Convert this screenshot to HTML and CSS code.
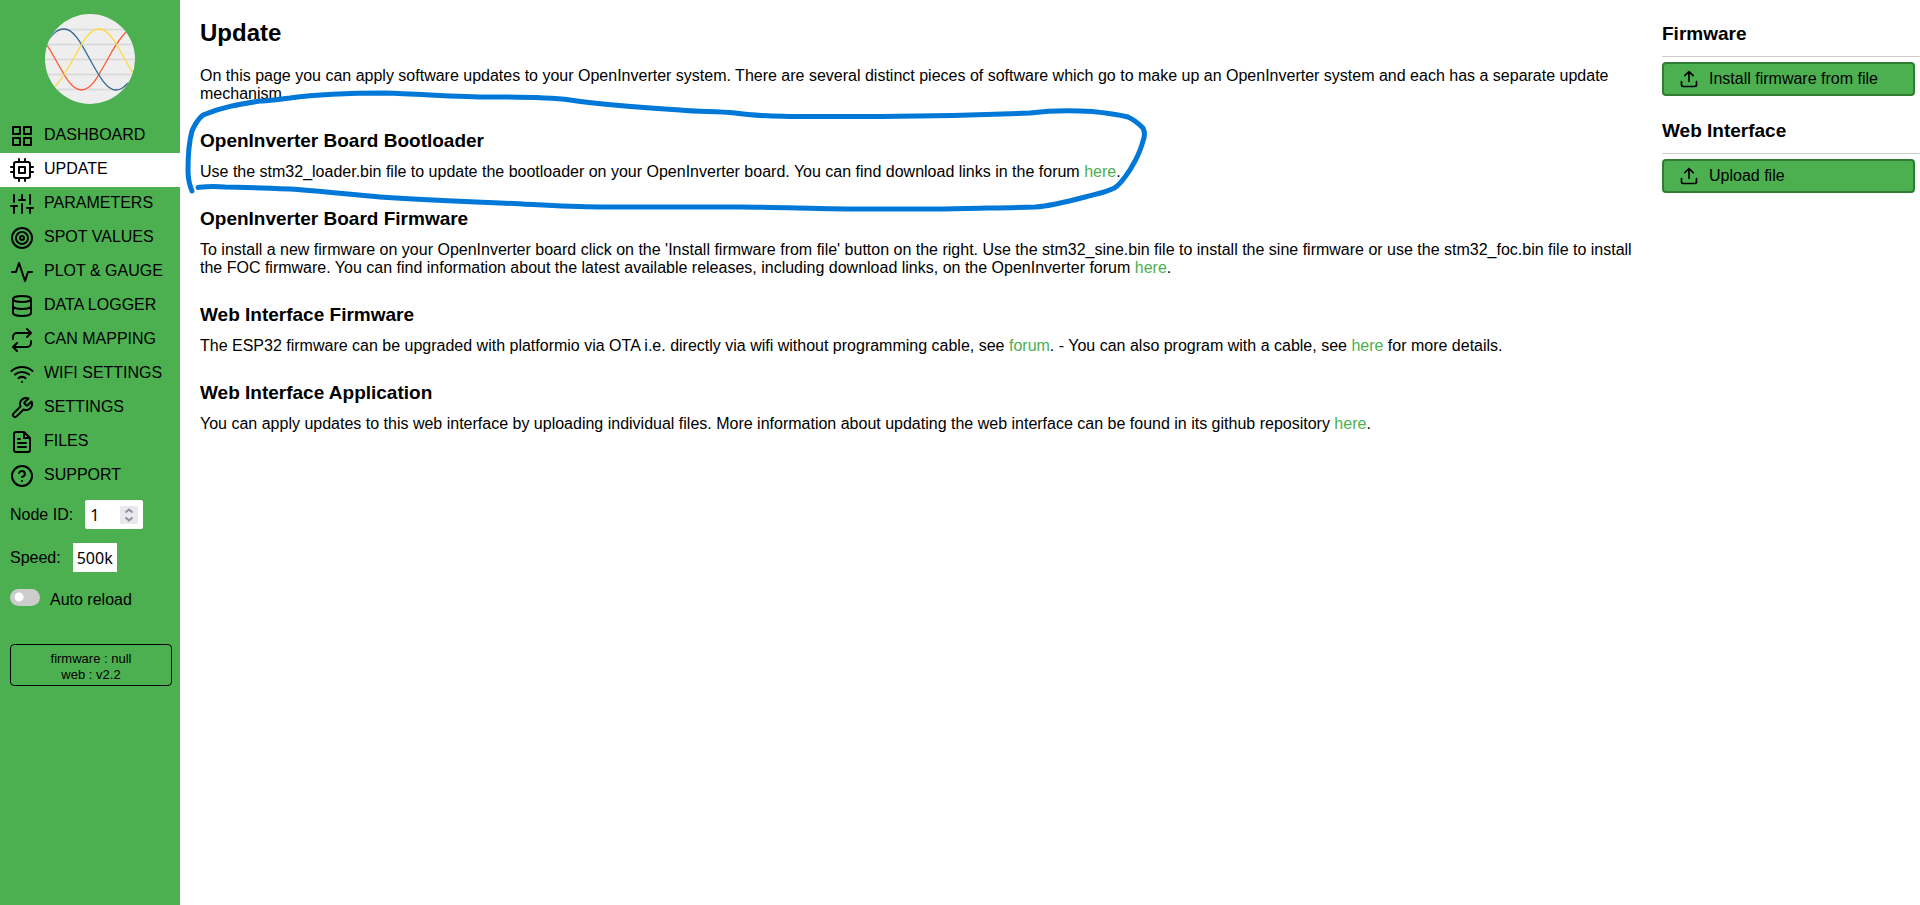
FILE: index.html
```html
<!DOCTYPE html>
<html lang="en">
<head>
<meta charset="utf-8">
<title>Update</title>
<link rel="stylesheet" href="styles.css">
</head>
<body>
<div class="layout">
  <div class="sidebar">
    <svg class="logo" viewBox="0 0 90 90" aria-label="OpenInverter">
      <clipPath id="disc"><circle cx="45" cy="45" r="45"/></clipPath>
      <g clip-path="url(#disc)" fill="none" stroke-width="1.300">
        <rect width="90" height="90" fill="#eeeeee"/>
        <path stroke="#d8d8d8" d="M0 15.500H90M0 30.500H90M0 45.500H90M0 60.500H90M0 75.500H90"/>
        <path stroke="#ff5a36" d="M0 28C4 34 7 39 10.500 45.500C20 63 27 76 36.500 76C46 76 53 63 62.500 45.500C69 33 75 24 82 17"/>
        <path stroke="#336699" d="M0 31C7 20 12 15 19 15C28.500 15 35.500 28 45 45.500C54.500 63 62 76 71 76C76 76 79 73 83 69"/>
        <path stroke="#ffd93b" d="M8 75C15 68 21 58 28 45.500C37.500 28 44.500 15 54 15C63.500 15 70.500 28 80 45.500C83 51 86 56 90 62"/>
      </g>
    </svg>
    <nav class="menu">
      <a class="menu-item" href="#dashboard"><svg class="icon" viewBox="0 0 24 24"><path d="M3 3h7v7H3zM14 3h7v7h-7zM14 14h7v7h-7zM3 14h7v7H3z"/></svg><span>DASHBOARD</span></a>
      <a class="menu-item active" href="#update"><svg class="icon" viewBox="0 0 24 24"><rect x="4" y="4" width="16" height="16" rx="2"/><path d="M9 9h6v6H9zM9 1v3M15 1v3M9 20v3M15 20v3M20 9h3M20 14h3M1 9h3M1 14h3"/></svg><span>UPDATE</span></a>
      <a class="menu-item" href="#parameters"><svg class="icon" viewBox="0 0 24 24"><path d="M4 21v-7M4 10V3M12 21v-9M12 8V3M20 21v-5M20 12V3M1 14h6M9 8h6M17 16h6"/></svg><span>PARAMETERS</span></a>
      <a class="menu-item" href="#spot"><svg class="icon" viewBox="0 0 24 24"><circle cx="12" cy="12" r="10"/><circle cx="12" cy="12" r="6"/><circle cx="12" cy="12" r="2"/></svg><span>SPOT VALUES</span></a>
      <a class="menu-item" href="#plot"><svg class="icon" viewBox="0 0 24 24"><path d="M22 12h-4l-3 9L9 3l-3 9H2"/></svg><span>PLOT &amp; GAUGE</span></a>
      <a class="menu-item" href="#logger"><svg class="icon" viewBox="0 0 24 24"><ellipse cx="12" cy="5" rx="9" ry="3"/><path d="M21 12c0 1.660-4 3-9 3s-9-1.340-9-3M3 5v14c0 1.660 4 3 9 3s9-1.340 9-3V5"/></svg><span>DATA LOGGER</span></a>
      <a class="menu-item" href="#can"><svg class="icon" viewBox="0 0 24 24"><path d="M17 1l4 4-4 4M3 11V9a4 4 0 0 1 4-4h14M7 23l-4-4 4-4M21 13v2a4 4 0 0 1-4 4H3"/></svg><span>CAN MAPPING</span></a>
      <a class="menu-item" href="#wifi"><svg class="icon" viewBox="0 0 24 24"><path d="M5 12.550a11 11 0 0 1 14.080 0M1.420 9a16 16 0 0 1 21.160 0M8.530 16.110a6 6 0 0 1 6.950 0M12 20h.01"/></svg><span>WIFI SETTINGS</span></a>
      <a class="menu-item" href="#settings"><svg class="icon" viewBox="0 0 24 24"><path d="M14.700 6.300a1 1 0 0 0 0 1.400l1.600 1.600a1 1 0 0 0 1.400 0l3.770-3.770a6 6 0 0 1-7.940 7.940l-6.910 6.910a2.120 2.120 0 0 1-3-3l6.910-6.910a6 6 0 0 1 7.940-7.940l-3.760 3.760z"/></svg><span>SETTINGS</span></a>
      <a class="menu-item" href="#files"><svg class="icon" viewBox="0 0 24 24"><path d="M14 2H6a2 2 0 0 0-2 2v16a2 2 0 0 0 2 2h12a2 2 0 0 0 2-2V8zM14 2v6h6M16 13H8M16 17H8M10 9H8"/></svg><span>FILES</span></a>
      <a class="menu-item" href="#support"><svg class="icon" viewBox="0 0 24 24"><circle cx="12" cy="12" r="10"/><path d="M9.090 9a3 3 0 0 1 5.830 1c0 2-3 3-3 3M12 17h.01"/></svg><span>SUPPORT</span></a>
    </nav>
    <form class="controls">
      <div class="field">
        <label for="node-id">Node ID:</label>
        <span class="stepper">
          <input id="node-id" class="number" type="number" value="1">
          <svg class="arrows" viewBox="0 0 18 18" aria-hidden="true"><path d="M5.500 6.500L9 3.500l3.500 3M5.500 11.500L9 14.500l3.500-3"/></svg>
        </span>
      </div>
      <div class="field">
        <label for="speed">Speed:</label>
        <select id="speed" class="speed"><option>500k</option></select>
      </div>
      <div class="field reload">
        <input id="reload" class="switch" type="checkbox">
        <label for="reload">Auto reload</label>
      </div>
    </form>
    <div class="version">firmware : null<br>web : v2.2</div>
  </div>

  <main class="content">
    <h2>Update</h2>
    <p>On this page you can apply software updates to your OpenInverter system. There are several distinct pieces of software which go to make up an OpenInverter system and each has a separate update mechanism.</p>
    <h3>OpenInverter Board Bootloader</h3>
    <p>Use the stm32_loader.bin file to update the bootloader on your OpenInverter board. You can find download links in the forum <a href="#bootloader">here</a>.</p>
    <h3>OpenInverter Board Firmware</h3>
    <p>To install a new firmware on your OpenInverter board click on the 'Install firmware from file' button on the right. Use the stm32_sine.bin file to install the sine firmware or use the stm32_foc.bin file to install the FOC firmware. You can find information about the latest available releases, including download links, on the OpenInverter forum <a href="#releases">here</a>.</p>
    <h3>Web Interface Firmware</h3>
    <p>The ESP32 firmware can be upgraded with platformio via OTA i.e. directly via wifi without programming cable, see <a href="#forum">forum</a>. - You can also program with a cable, see <a href="#cable">here</a> for more details.</p>
    <h3>Web Interface Application</h3>
    <p>You can apply updates to this web interface by uploading individual files. More information about updating the web interface can be found in its github repository <a href="#github">here</a>.</p>
  </main>

  <aside class="actions">
    <section>
      <h3>Firmware</h3>
      <button class="action" type="button"><svg class="upload" viewBox="0 0 24 24"><path d="M21 15v4a2 2 0 0 1-2 2H5a2 2 0 0 1-2-2v-4M17 8l-5-5-5 5M12 3v12"/></svg>Install firmware from file</button>
    </section>
    <section>
      <h3>Web Interface</h3>
      <button class="action" type="button"><svg class="upload" viewBox="0 0 24 24"><path d="M21 15v4a2 2 0 0 1-2 2H5a2 2 0 0 1-2-2v-4M17 8l-5-5-5 5M12 3v12"/></svg>Upload file</button>
    </section>
  </aside>
</div>

<svg class="ink" width="1160" height="220" viewBox="0 0 1160 220" aria-hidden="true">
  <path d="M192 191C189 184 188 178 188 170C188 155 189 142 192 131C195 124 198 119 203 115C222 107 240 104 260 101C270 101 280 99 290 98C320 94 350 93 385 93C420 94 460 97 490 97C520 97 545 97 570 100C590 103 620 106 680 110C700 112 715 111 735 113C755 116 770 116 790 116.500H880C930 116 980 115 1030 113C1045 111 1070 110 1092 111.500C1108 113 1120 115 1128 117C1135 120 1140 125 1143 128C1145 132 1145 136 1143 141C1140 153 1132 168 1125 177C1120 183 1118 187 1112 189C1104 193 1095 194 1085 197C1070 201 1050 206 1035 207C1000 208 970 208 940 209H870C820 209 780 207 740 207H600C560 207 530 204 500 203C450 201 410 199 380 197C345 194 320 191 290 189C265 188 240 187 225 187C210 186 203 187 198 187.500"/>
</svg>
</body>
</html>
```
FILE: styles.css
```css
* {
  box-sizing: border-box;
}

body {
  margin: 0;
  background: #fff;
  color: #000;
  font: 16px/18px "Liberation Sans", Arial, sans-serif;
}

.layout {
  display: grid;
  grid-template-columns: 180px 1fr 258px;
  min-height: 100vh;
}

.sidebar {
  background: #4caf50;
  padding-top: 14px;
}

.logo {
  display: block;
  width: 90px;
  height: 90px;
  margin: 0 auto 15px;
}

.menu-item {
  display: flex;
  gap: 10px;
  padding: 5px 10px;
  color: #000;
  line-height: 22px;
  text-decoration: none;
}

.menu-item.active {
  background: #fff;
}

.icon,
.upload {
  flex: none;
  width: 24px;
  height: 24px;
  fill: none;
  stroke: #000;
  stroke-width: 2;
  stroke-linecap: round;
  stroke-linejoin: round;
}

.controls {
  display: flex;
  flex-direction: column;
  gap: 14px;
  padding: 7px 10px 0;
}

.field {
  display: flex;
  align-items: center;
  gap: 12px;
}

.field label {
  line-height: 20px;
}

.stepper {
  position: relative;
  display: flex;
}

.number,
.speed {
  height: 29px;
  margin: 0;
  padding: 0 5px;
  border: 0;
  background: #fff;
  color: #000;
  font: 16px "Noto Sans", sans-serif;
  appearance: none;
}

.number {
  width: 58px;
  border-radius: 2px;
  appearance: textfield;
}

.number::-webkit-inner-spin-button {
  display: none;
}

.speed {
  width: 44px;
  padding: 0 4px;
  border-radius: 0;
}

.arrows {
  position: absolute;
  top: 6px;
  right: 5px;
  width: 18px;
  height: 18px;
  background: #e9e9ed;
  fill: none;
  stroke: #8f8f9d;
  stroke-width: 2;
}

.reload {
  align-items: flex-start;
  gap: 10px;
  padding-top: 3px;
}

.reload label {
  line-height: 22px;
}

.switch {
  width: 30px;
  height: 17px;
  margin: 0;
  border-radius: 9px;
  background: radial-gradient(circle at 9px 8px, #fff 4px, #ccc 5px);
  appearance: none;
}

.version {
  margin: 33px 8px 0 10px;
  padding: 6px 5px 2px;
  border: 1px solid #000;
  border-radius: 4px;
  font-size: 13px;
  line-height: 16px;
  text-align: center;
}

.content {
  padding: 20px;
}

h2 {
  margin: 0 0 22px;
  font-size: 24px;
  line-height: 25px;
}

h3 {
  margin: 0 0 12px;
  font-size: 19px;
  line-height: 20px;
}

.content p {
  margin: 0 0 28px;
}

.content a {
  color: #4caf50;
  text-decoration: none;
}

.actions {
  display: flex;
  flex-direction: column;
  gap: 25px;
  padding-top: 24px;
}

.actions h3 {
  margin-bottom: 5px;
  padding-bottom: 12px;
  border-bottom: 1px solid #ccc;
}

.action {
  display: flex;
  align-items: center;
  gap: 10px;
  width: calc(100% - 5px);
  height: 34px;
  padding: 0 15px;
  border: 2px solid #2e7d32;
  border-radius: 4px;
  background: #4caf50;
  color: #000;
  font: inherit;
}

.upload {
  width: 20px;
  height: 20px;
}

.ink {
  position: absolute;
  top: 0;
  left: 0;
  fill: none;
  stroke: #0078d7;
  stroke-width: 5;
  stroke-linecap: round;
  stroke-linejoin: round;
  pointer-events: none;
}
```
